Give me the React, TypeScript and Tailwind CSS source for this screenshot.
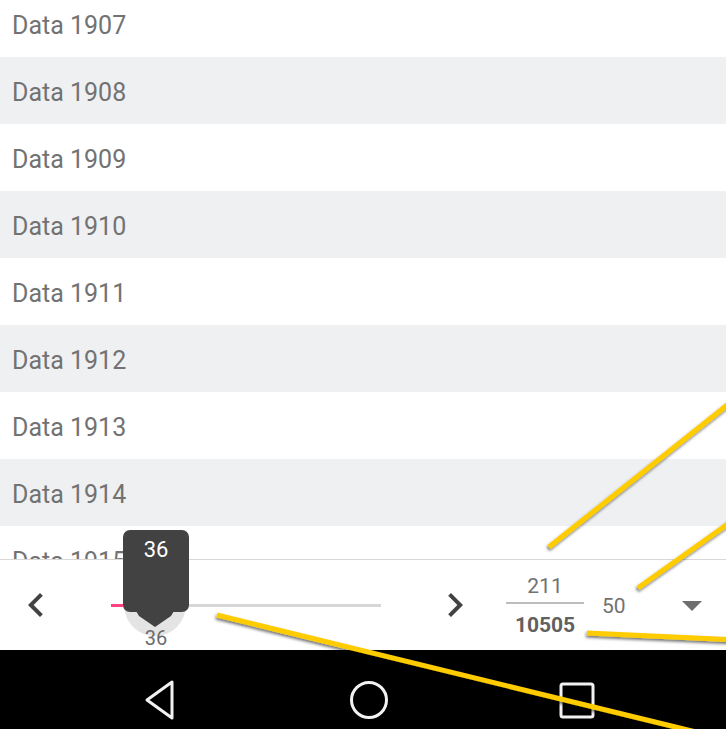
import React from "react";

const rows = [1907, 1908, 1909, 1910, 1911, 1912, 1913, 1914, 1915];

function ChevronLeft() {
  return (
    <svg width="48" height="48" viewBox="0 0 24 24" className="fill-[#424242]">
      <path d="M15.41 7.41L14 6l-6 6 6 6 1.41-1.41L10.83 12z" />
    </svg>
  );
}

function ChevronRight() {
  return (
    <svg width="48" height="48" viewBox="0 0 24 24" className="fill-[#424242]">
      <path d="M10 6L8.59 7.41 13.17 12l-4.58 4.59L10 18l6-6z" />
    </svg>
  );
}

function Slider() {
  return (
    <div className="relative ml-[39px] w-[270px] h-[3px] bg-[#d6d6d6]">
      <div className="absolute left-0 top-0 h-[3px] w-[12px] bg-[#ff4081]" />
      {/* focus ring */}
      <div className="absolute left-[13px] top-[-30px] w-[62px] h-[62px] rounded-full bg-[#e4e4e4]" />
      {/* value label */}
      <div className="absolute left-[12px] top-[-74px] w-[66px] h-[82px] rounded-[7px] bg-[#424242] flex justify-center">
        <span className="mt-[6px] text-[22px] leading-[28px] text-white">36</span>
      </div>
      <svg className="absolute left-[25px] top-[7px]" width="40" height="17" viewBox="0 0 40 17">
        <path d="M0 0 H38 L35 5 L19 16 L3 5 Z" fill="#424242" />
      </svg>
      <span className="absolute left-[24px] top-[21px] w-[42px] text-center text-[20px] leading-[26px] text-[#6b6b6b]">
        36
      </span>
    </div>
  );
}

export default function App() {
  return (
    <div className="relative w-[726px] h-[729px] overflow-hidden bg-white font-['Roboto',sans-serif]">
      <div className="h-[559px] overflow-hidden">
        <div className="-mt-[10px] flex flex-col">
          {rows.map((n, i) => (
            <div
              key={n}
              className={`h-[67px] shrink-0 flex items-center pt-[4px] px-3 ${i % 2 === 1 ? "bg-[#eff0f2]" : "bg-white"}`}
            >
              <span className="text-[25px] text-[#727272]">Data {n}</span>
            </div>
          ))}
        </div>
      </div>

      <div className="relative z-10 h-[91px] border-t border-[#d8d8d8] bg-white flex items-center">
        <div className="w-[72px] flex justify-center">
          <ChevronLeft />
        </div>
        <Slider />
        <div className="ml-[50px]">
          <ChevronRight />
        </div>
        <div className="ml-[27px] w-[78px] flex flex-col items-center">
          <span className="text-[21px] leading-[26px] text-[#727272]">211</span>
          <div className="w-full h-[2px] bg-[#bdbdbd] mt-[3px] mb-[8px]" />
          <span className="text-[21px] leading-[26px] font-bold text-[#616161]">10505</span>
        </div>
        <span className="ml-[18px] pt-[3px] text-[21px] text-[#727272]">50</span>
        <div className="ml-[42px]">
          <svg width="48" height="48" viewBox="0 0 24 24" className="fill-[#6e6e6e]">
            <path d="M7 10l5 5 5-5z" />
          </svg>
        </div>
      </div>

      <div className="h-[79px] bg-black flex items-center pt-[20px] pl-[57px]">
        <div className="w-[208px] flex justify-center">
          <svg width="40" height="44" viewBox="0 0 40 44">
            <path d="M31 4 L31 40 L6 22 Z" fill="none" stroke="#f2f2f2" strokeWidth="3" strokeLinejoin="round" />
          </svg>
        </div>
        <div className="w-[208px] flex justify-center">
          <svg width="42" height="42" viewBox="0 0 42 42">
            <circle cx="21" cy="21" r="17.5" fill="none" stroke="#f2f2f2" strokeWidth="3" />
          </svg>
        </div>
        <div className="w-[208px] flex justify-center">
          <svg width="40" height="40" viewBox="0 0 40 40">
            <rect x="4" y="4" width="32" height="33" rx="2" fill="none" stroke="#f2f2f2" strokeWidth="3" />
          </svg>
        </div>
      </div>

      {/* annotation overlay */}
      <svg className="absolute inset-0 pointer-events-none z-20" width="726" height="729" viewBox="0 0 726 729">
        <defs>
          <filter id="sh" x="-20%" y="-20%" width="140%" height="140%">
            <feDropShadow dx="-1" dy="2" stdDeviation="1.5" floodColor="#000" floodOpacity="0.55" />
          </filter>
        </defs>
        <g stroke="#ffcc00" strokeWidth="5" filter="url(#sh)">
          <line x1="549" y1="547" x2="760" y2="379" />
          <line x1="638" y1="588" x2="760" y2="501" />
          <line x1="587" y1="633" x2="760" y2="641" />
          <line x1="217" y1="615" x2="700" y2="733" />
        </g>
      </svg>
    </div>
  );
}
